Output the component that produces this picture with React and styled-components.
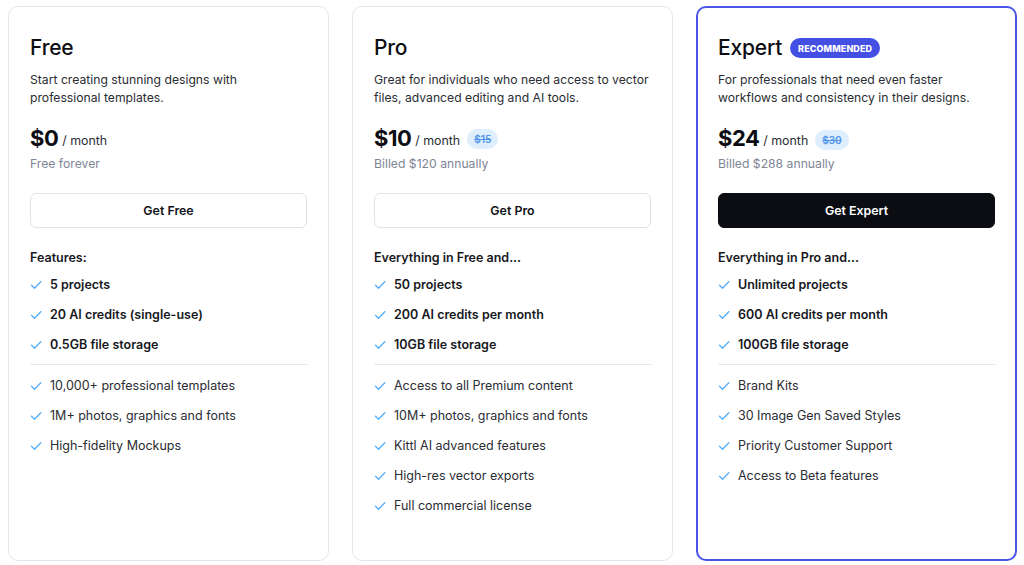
import React from "react";
import styled, { createGlobalStyle } from "styled-components";

const Global = createGlobalStyle`
  html, body { margin: 0; padding: 0; background: #ffffff; }
  body { font-family: Inter, "Noto Sans", "Liberation Sans", sans-serif; color: #111318; -webkit-font-smoothing: antialiased; }
`;

const Page = styled.div`
  display: grid;
  grid-template-columns: repeat(3, 321px);
  gap: 23px;
  padding: 6px 7px 4px 8px;
  box-sizing: border-box;
  width: 1024px;
  height: 565px;
`;

const Card = styled.div`
  box-sizing: border-box;
  border: ${(p) => (p.$highlight ? "2px solid #4a55e6" : "1.5px solid #e3e6ec")};
  border-radius: 10px;
  padding: ${(p) => (p.$highlight ? "26px 20px" : "26.5px 21px")};
  display: flex;
  flex-direction: column;
  background: #fff;
`;

const TitleRow = styled.div`
  display: flex;
  align-items: center;
  gap: 8px;
  height: 28px;
`;

const Title = styled.h2`
  margin: 0;
  font-size: 21px;
  font-weight: 500;
  letter-spacing: -0.2px;
  line-height: 28px;
  color: #0b0d12;
`;

const Badge = styled.span`
  display: inline-flex;
  align-items: center;
  height: 20px;
  padding: 0 8px;
  border-radius: 999px;
  background: #4450e4;
  color: #fff;
  font-size: 9px;
  font-weight: 800;
  letter-spacing: 0.1px;
`;

const Desc = styled.p`
  margin: 9px 0 0;
  font-size: 12.2px;
  line-height: 18px;
  color: #2a2d33;
`;

const PriceRow = styled.div`
  display: flex;
  align-items: center;
  margin-top: 16px;
  height: 30px;
`;

const Amount = styled.span`
  font-size: 22px;
  font-weight: 700;
  letter-spacing: -0.5px;
  color: #0b0d12;
`;

const Per = styled.span`
  font-size: 12.4px;
  color: #2a2d33;
  margin-left: 4px;
  margin-top: 5px;
`;

const OldPrice = styled.span`
  margin-left: 7px;
  margin-top: 3px;
  height: 20px;
  padding: 0 7px;
  display: inline-flex;
  align-items: center;
  border-radius: 999px;
  background: #deeefd;
  color: #4d95e8;
  font-size: 10px;
  font-weight: 600;
  text-decoration: line-through;
`;

const Sub = styled.div`
  margin-top: 2px;
  font-size: 12.2px;
  line-height: 18px;
  color: #7e8594;
`;

const Button = styled.button`
  margin-top: 20px;
  height: 35px;
  width: 100%;
  border-radius: 6px;
  font-family: inherit;
  font-size: 12.4px;
  font-weight: 600;
  cursor: pointer;
  border: ${(p) => (p.$primary ? "1px solid #0b0d12" : "1px solid #dfe2e8")};
  background: ${(p) => (p.$primary ? "#0b0d12" : "#ffffff")};
  color: ${(p) => (p.$primary ? "#ffffff" : "#111318")};
`;

const FeatHead = styled.div`
  margin-top: 21px;
  font-size: 12.5px;
  font-weight: 600;
  line-height: 18px;
  color: #16181d;
`;

const List = styled.ul`
  list-style: none;
  margin: ${(p) => (p.$first ? "9px 0 0" : "0")};
  padding: 0;
  display: flex;
  flex-direction: column;
  gap: 12px;
`;

const Item = styled.li`
  display: flex;
  align-items: center;
  gap: 8px;
  font-size: 12.5px;
  line-height: 18px;
  font-weight: ${(p) => (p.$bold ? 600 : 400)};
  color: ${(p) => (p.$bold ? "#16181d" : "#2a2d33")};
`;

const Divider = styled.hr`
  border: none;
  border-top: 1px solid #e5e8ee;
  margin: 10px 0 12px;
`;

const Check = () => (
  <svg width="12" height="12" viewBox="0 0 12 12" fill="none" style={{ flexShrink: 0 }}>
    <path d="M1.5 6.3 L4.5 9.2 L10.8 2.8" stroke="#56acf4" strokeWidth="1.3" strokeLinecap="round" strokeLinejoin="round" />
  </svg>
);

const plans = [
  {
    name: "Free",
    desc: "Start creating stunning designs with professional templates.",
    price: "$0",
    sub: "Free forever",
    cta: "Get Free",
    head: "Features:",
    bold: ["5 projects", "20 AI credits (single-use)", "0.5GB file storage"],
    rest: ["10,000+ professional templates", "1M+ photos, graphics and fonts", "High-fidelity Mockups"],
  },
  {
    name: "Pro",
    desc: "Great for individuals who need access to vector files, advanced editing and AI tools.",
    price: "$10",
    old: "$15",
    sub: "Billed $120 annually",
    cta: "Get Pro",
    head: "Everything in Free and...",
    bold: ["50 projects", "200 AI credits per month", "10GB file storage"],
    rest: [
      "Access to all Premium content",
      "10M+ photos, graphics and fonts",
      "Kittl AI advanced features",
      "High-res vector exports",
      "Full commercial license",
    ],
  },
  {
    name: "Expert",
    badge: "RECOMMENDED",
    highlight: true,
    desc: "For professionals that need even faster workflows and consistency in their designs.",
    price: "$24",
    old: "$30",
    sub: "Billed $288 annually",
    cta: "Get Expert",
    head: "Everything in Pro and...",
    bold: ["Unlimited projects", "600 AI credits per month", "100GB file storage"],
    rest: ["Brand Kits", "30 Image Gen Saved Styles", "Priority Customer Support", "Access to Beta features"],
  },
];

export default function App() {
  return (
    <>
      <Global />
      <Page>
        {plans.map((p) => (
          <Card key={p.name} $highlight={p.highlight}>
            <TitleRow>
              <Title>{p.name}</Title>
              {p.badge && <Badge>{p.badge}</Badge>}
            </TitleRow>
            <Desc>{p.desc}</Desc>
            <PriceRow>
              <Amount>{p.price}</Amount>
              <Per>/ month</Per>
              {p.old && <OldPrice>{p.old}</OldPrice>}
            </PriceRow>
            <Sub>{p.sub}</Sub>
            <Button $primary={p.highlight}>{p.cta}</Button>
            <FeatHead>{p.head}</FeatHead>
            <List $first>
              {p.bold.map((f) => (
                <Item key={f} $bold>
                  <Check />
                  {f}
                </Item>
              ))}
            </List>
            <Divider />
            <List>
              {p.rest.map((f) => (
                <Item key={f}>
                  <Check />
                  {f}
                </Item>
              ))}
            </List>
          </Card>
        ))}
      </Page>
    </>
  );
}
